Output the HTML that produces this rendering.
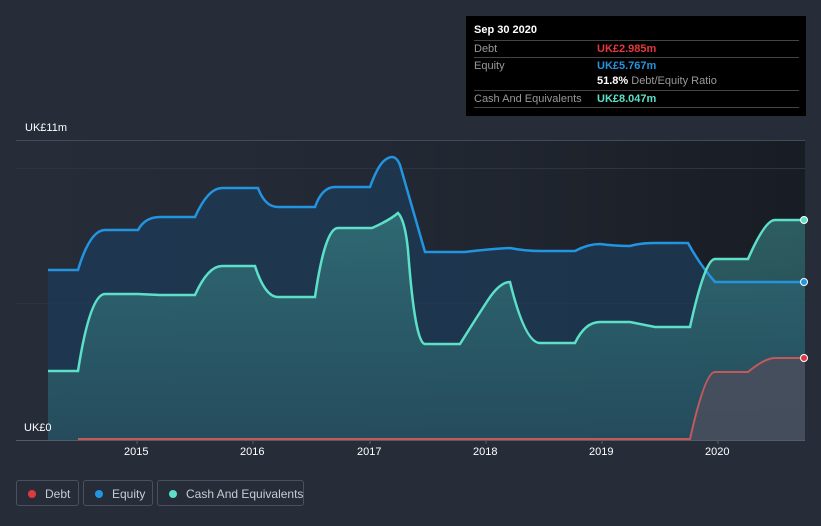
<!DOCTYPE html>
<html><head><meta charset="utf-8"><style>
body{margin:0;width:821px;height:526px;background:#262d39;font-family:"Liberation Sans",sans-serif;overflow:hidden;position:relative}
.tip{position:absolute;left:466px;top:16px;width:340px;height:100px;background:#000;color:#fff;font-size:11px}
.tip .h{position:absolute;left:8px;top:8px;font-weight:bold}
.row{position:absolute;left:8px;width:325px;border-top:1px solid #444;height:16px;line-height:16px;color:#999}
.row span{position:absolute;left:123px;font-weight:bold}
.leg{position:absolute;top:480px;height:26px;border:1px solid #4a515c;border-radius:3px;color:#c8ccd2;font-size:12px;line-height:26px;box-sizing:border-box;white-space:nowrap}
.leg i{position:absolute;left:11px;top:9px;width:8px;height:8px;border-radius:50%}
.leg span{position:absolute;left:28px;top:0}
.ax{position:absolute;color:#fff;font-size:11px}
</style></head><body>
<svg width="821" height="526" style="position:absolute;left:0;top:0">
<defs>
<linearGradient id="bg" x1="0" x2="1"><stop offset="0" stop-color="#262d39"/><stop offset="0.5" stop-color="#222833"/><stop offset="1" stop-color="#181c23"/></linearGradient>
<linearGradient id="cf" x1="0" y1="0" x2="0" y2="1"><stop offset="0" stop-color="#3a8a8a" stop-opacity="0.6"/><stop offset="1" stop-color="#2a5a66" stop-opacity="0.6"/></linearGradient>
</defs>
<rect x="16" y="140" width="789" height="300" fill="url(#bg)"/>
<line x1="16" y1="140.5" x2="805" y2="140.5" stroke="#444b56"/>
<line x1="16" y1="168.5" x2="805" y2="168.5" stroke="#2f3540"/>
<line x1="16" y1="303.5" x2="805" y2="303.5" stroke="#2f3540"/>
<path d="M48,440 L48,270 L78,270 Q90,230 105,230 L138,230 Q145,217 160,217 L195,217 Q208,188 222,188 L258,188 Q265,207 278,207 L315,207 Q322,187 335,187 L370,187 Q378,165 385,160 Q395,152 400,165 Q410,200 425,252 L465,252 Q490,249 510,248 Q525,251 540,251 L575,251 Q588,244 600,244 Q615,246 630,246 Q640,243 655,243 L688,243 Q700,265 715,282 L805,282 L805,440Z" fill="#1d3a55" fill-opacity="0.8"/>
<path d="M48,440 L48,371 L78,371 Q90,294 105,294 L138,294 L160,295 L195,295 Q208,266 222,266 L255,266 Q265,297 278,297 L315,297 Q325,228 338,228 L372,228 Q390,220 398,213 Q405,220 408,250 Q415,344 425,344 L460,344 Q475,320 488,300 Q500,282 510,282 Q525,343 540,343 L575,343 Q585,322 600,322 L630,322 L655,327 L690,327 Q705,259 715,259 L748,259 Q765,220 775,220 L805,220 L805,440Z" fill="url(#cf)"/>
<path d="M690,440 Q705,372 715,372 L748,372 Q765,358 775,358 L805,358 L805,440Z" fill="#4a4e5c" fill-opacity="0.85"/>
<path d="M48,270 L78,270 Q90,230 105,230 L138,230 Q145,217 160,217 L195,217 Q208,188 222,188 L258,188 Q265,207 278,207 L315,207 Q322,187 335,187 L370,187 Q378,165 385,160 Q395,152 400,165 Q410,200 425,252 L465,252 Q490,249 510,248 Q525,251 540,251 L575,251 Q588,244 600,244 Q615,246 630,246 Q640,243 655,243 L688,243 Q700,265 715,282 L805,282" fill="none" stroke="#2394df" stroke-width="2.5"/>
<path d="M48,371 L78,371 Q90,294 105,294 L138,294 L160,295 L195,295 Q208,266 222,266 L255,266 Q265,297 278,297 L315,297 Q325,228 338,228 L372,228 Q390,220 398,213 Q405,220 408,250 Q415,344 425,344 L460,344 Q475,320 488,300 Q500,282 510,282 Q525,343 540,343 L575,343 Q585,322 600,322 L630,322 L655,327 L690,327 Q705,259 715,259 L748,259 Q765,220 775,220 L805,220" fill="none" stroke="#5ce0c8" stroke-width="2.5"/>
<path d="M78,439 L690,439 Q705,372 715,372 L748,372 Q765,358 775,358 L805,358" fill="none" stroke="#c4595c" stroke-width="2"/>
<line x1="16" y1="440.5" x2="805" y2="440.5" stroke="#555c66"/>
<g stroke="#555c66"><line x1="137" y1="440" x2="137" y2="444"/><line x1="253" y1="440" x2="253" y2="444"/><line x1="370" y1="440" x2="370" y2="444"/><line x1="486" y1="440" x2="486" y2="444"/><line x1="602" y1="440" x2="602" y2="444"/><line x1="718" y1="440" x2="718" y2="444"/></g>
<circle cx="804" cy="220" r="3.5" fill="#5ce0c8" stroke="#fff"/>
<circle cx="804" cy="282" r="3.5" fill="#2394df" stroke="#fff"/>
<circle cx="804" cy="358" r="3.5" fill="#e0383e" stroke="#fff"/>
</svg>
<div class="ax" style="left:25px;top:122px">UK£11m</div>
<div class="ax" style="left:24px;top:422px">UK£0</div>
<div class="ax" style="left:124px;top:446px">2015</div>
<div class="ax" style="left:240px;top:446px">2016</div>
<div class="ax" style="left:357px;top:446px">2017</div>
<div class="ax" style="left:473px;top:446px">2018</div>
<div class="ax" style="left:589px;top:446px">2019</div>
<div class="ax" style="left:705px;top:446px">2020</div>
<div class="tip">
<div class="h">Sep 30 2020</div>
<div class="row" style="top:24px">Debt<span style="color:#e2393e">UK£2.985m</span></div>
<div class="row" style="top:41px">Equity<span style="color:#2394df">UK£5.767m</span></div>
<div class="row" style="top:57px;border-top:none"><span style="color:#fff">51.8% <b style="color:#999;font-weight:normal">Debt/Equity Ratio</b></span></div>
<div class="row" style="top:74px;border-bottom:1px solid #444">Cash And Equivalents<span style="color:#5ce0c8">UK£8.047m</span></div>
</div>
<div class="leg" style="left:16px;width:63px"><i style="background:#e2393e"></i><span>Debt</span></div>
<div class="leg" style="left:83px;width:70px"><i style="background:#2394df"></i><span>Equity</span></div>
<div class="leg" style="left:157px;width:147px"><i style="background:#5ce0c8"></i><span>Cash And Equivalents</span></div>
</body></html>
